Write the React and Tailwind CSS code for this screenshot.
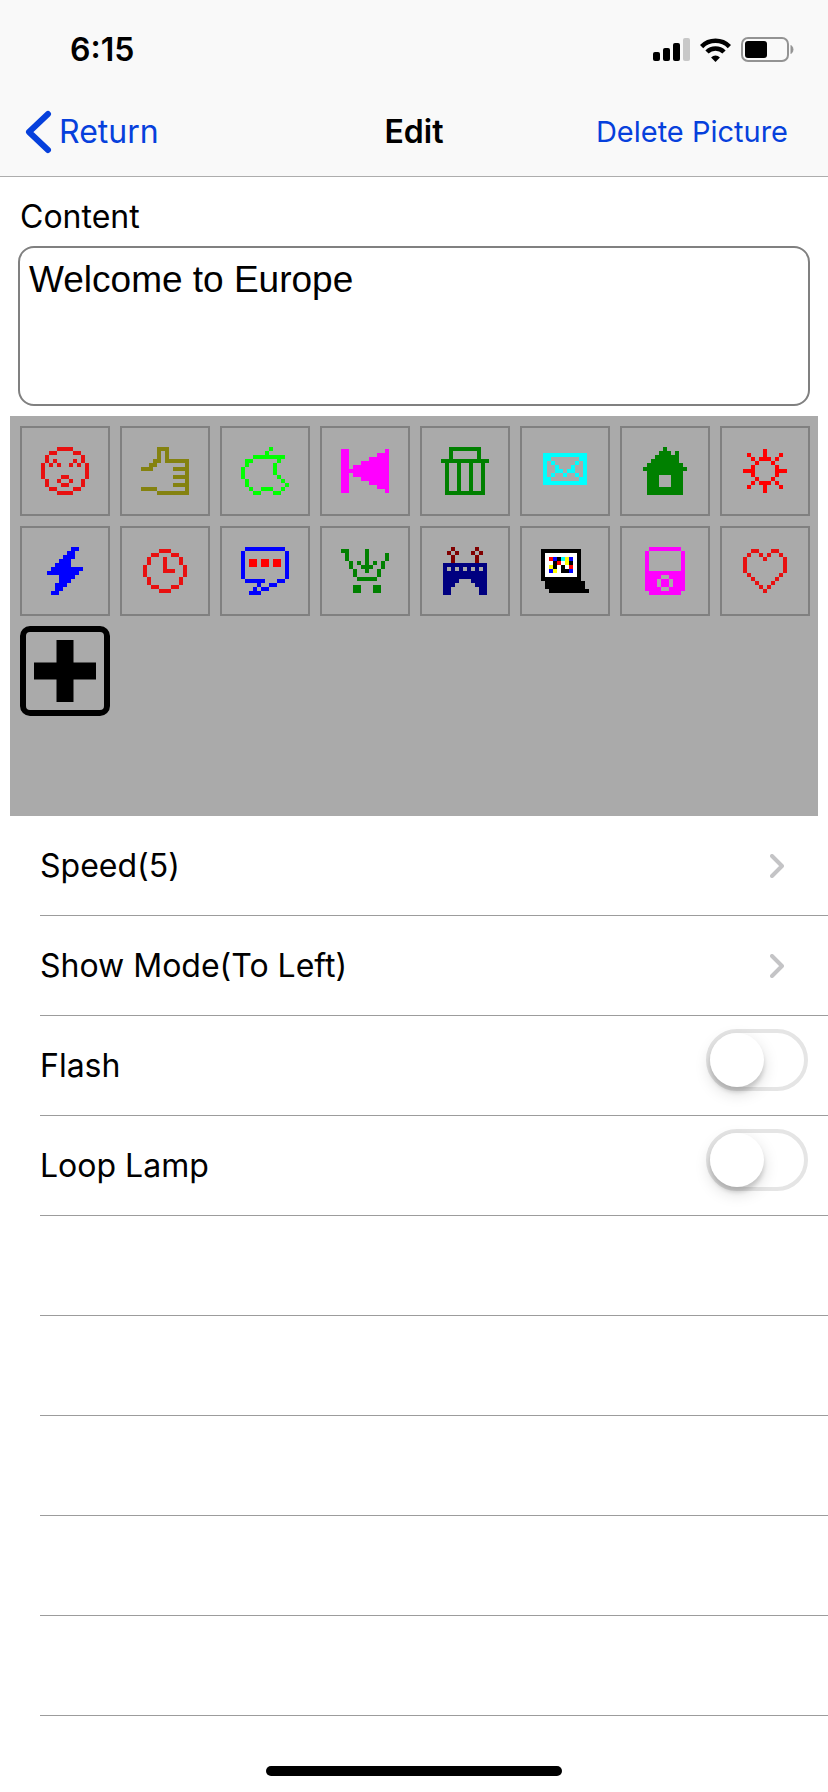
import { useState } from 'react';

const COLORS = {
  r: '#e81010',
  R: '#ff0000',
  o: '#848210',
  l: '#00ff00',
  m: '#ff00ff',
  g: '#008000',
  c: '#00ffff',
  b: '#0000ff',
  n: '#000080',
  d: '#800000',
  k: '#000000',
  w: '#ffffff',
  y: '#ffff00',
};

// one character per LED pixel, '.' is off
const ICONS = [
  {
    name: 'Face',
    rows: [
      '....rrrr....',
      '..rr....rr..',
      '.r........r.',
      '.r.r....r.r.',
      'r.r.r..r.r.r',
      'r..........r',
      'r..........r',
      'r....rr....r',
      '.r..r..r..r.',
      '.r...rr...r.',
      '..rr....rr..',
      '....rrrr....',
    ],
  },
  {
    name: 'Thumb up',
    rows: [
      '....ooo.....',
      '....o.o.....',
      '....o.o.....',
      '...oo.oooooo',
      '..oo.......o',
      'ooo.....oooo',
      '...........o',
      '........oooo',
      '...........o',
      '........oooo',
      'oooo.......o',
      '....oooooooo',
    ],
  },
  {
    name: 'Apple',
    rows: [
      '.......l....',
      '......l.....',
      '...llllllll.',
      '.ll......l..',
      '.l......l...',
      'l.......l...',
      'l.......l...',
      'l........l..',
      '.l........l.',
      '.l.........l',
      '..l..lll..l.',
      '...ll...ll..',
    ],
  },
  {
    name: 'Horn',
    rows: [
      'mm.........m',
      'mm.......mmm',
      'mm.....mmmmm',
      'mm...mmmmmmm',
      'mm.mmmmmmmmm',
      'mmmmmmmmmmmm',
      'mm.mmmmmmmmm',
      'mm...mmmmmmm',
      'mm.....mmmmm',
      'mm.......mmm',
      'mm.........m',
    ],
  },
  {
    name: 'Trash',
    rows: [
      '..gggggggg..',
      '..g......g..',
      '..g......g..',
      'gggggggggggg',
      '.g..g..g..g.',
      '.g..g..g..g.',
      '.g..g..g..g.',
      '.g..g..g..g.',
      '.g..g..g..g.',
      '.g..g..g..g.',
      '.g..g..g..g.',
      '.gggggggggg.',
    ],
  },
  {
    name: 'Mail',
    rows: [
      'ccccccccccc',
      'cc.......cc',
      'c.c.....c.c',
      'c..c...c..c',
      'c..cc.cc..c',
      'c.c..c..c.c',
      'cc.......cc',
      'ccccccccccc',
      '...........',
    ],
  },
  {
    name: 'House',
    rows: [
      '.....g.....',
      '....ggg.g..',
      '...gggggg..',
      '..ggggggg..',
      '.ggggggggg.',
      'ggggggggggg',
      '.ggggggggg.',
      '.ggg...ggg.',
      '.ggg...ggg.',
      '.ggg...ggg.',
      '.ggggggggg.',
      '.ggggggggg.',
    ],
  },
  {
    name: 'Sun',
    rows: [
      '.....R.....',
      '.R...R...R.',
      '..R.RRR.R..',
      '...R...R...',
      '..R.....R..',
      'RRR.....RRR',
      '..R.....R..',
      '...R...R...',
      '..R.RRR.R..',
      '.R...R...R.',
      '.....R.....',
    ],
  },
  {
    name: 'Lightning',
    rows: [
      '......bb.',
      '.....bb..',
      '....bbb..',
      '...bbb...',
      '..bbbb...',
      '.bbbbbbbb',
      'bbbbbbbb.',
      '...bbbb..',
      '...bbb...',
      '..bbb....',
      '..bb.....',
      '.bb......',
    ],
  },
  {
    name: 'Clock',
    rows: [
      '....rrr....',
      '..rr...rr..',
      '.r...r...r.',
      '.r...r...r.',
      'r....r....r',
      'r....rrr..r',
      'r.........r',
      '.r.......r.',
      '.r.......r.',
      '..rr...rr..',
      '....rrr....',
    ],
  },
  {
    name: 'Message',
    rows: [
      '.bbbbbbbbbb.',
      'b..........b',
      'b..........b',
      'b.RR.RR.RR.b',
      'b.RR.RR.RR.b',
      'b..........b',
      'b..........b',
      'b..........b',
      '.bbbbb...bb.',
      '....b..bb...',
      '...b.bb.....',
      '..bbb.......',
    ],
  },
  {
    name: 'Cart',
    rows: [
      'gg....g.....',
      '.g....g....g',
      '.g....g....g',
      '..g.g.g.g.g.',
      '..g..ggg..g.',
      '...g..g..g..',
      '...g.....g..',
      '....ggggg...',
      '............',
      '...gg...gg..',
      '...gg...gg..',
    ],
  },
  {
    name: 'Bridge',
    rows: [
      '..d.....d..',
      '.d.d...d.d.',
      '..d.....d..',
      '..d.....d..',
      'nnnnnnnnnnn',
      'n.n.n.n.n.n',
      'nnnnnnnnnnn',
      'nnnnnnnnnnn',
      'nnnn...nnnn',
      'nnn.....nnn',
      'nn.......nn',
      'nn.......nn',
    ],
  },
  {
    name: 'Computer',
    rows: [
      'kkkkkkkkkk..',
      'kwwwwwwwwk..',
      'kwRbkcybwk..',
      'kwwkRwykwk..',
      'kwykwkwRwk..',
      'kwbywkkbwk..',
      'kwwwwwwwwk..',
      'kkkkkkkkkk..',
      '.kkkkkkkkkk.',
      '.kkkkkkkkkk.',
      '..kkkkkkkkkk',
    ],
  },
  {
    name: 'Player',
    rows: [
      '.mmmmmmmm.',
      'm........m',
      'm........m',
      'm........m',
      'm........m',
      'm........m',
      'mmmmmmmmmm',
      'mmmm..mmmm',
      'mmm.mm.mmm',
      'mmm.mm.mmm',
      'mmmm..mmmm',
      '.mmmmmmmm.',
    ],
  },
  {
    name: 'Heart',
    rows: [
      '..rr...rr..',
      '.r..r.r..r.',
      'r....r....r',
      'r.........r',
      'r.........r',
      'r.........r',
      '.r.......r.',
      '..r.....r..',
      '...r...r...',
      '....r.r....',
      '.....r.....',
    ],
  },
];

function PixelIcon({ rows }) {
  const cols = rows[0].length;
  return (
    <svg
      width={cols * 4}
      height={rows.length * 4}
      viewBox={`0 0 ${cols} ${rows.length}`}
      shapeRendering="crispEdges"
      aria-hidden="true"
    >
      {rows.map((row, y) =>
        row.split('').map((ch, x) =>
          ch === '.' ? null : (
            <rect key={`${x}-${y}`} x={x} y={y} width="1" height="1" fill={COLORS[ch]} />
          )
        )
      )}
    </svg>
  );
}

function StatusBar() {
  return (
    <div className="flex h-[88px] items-center justify-between pt-3 pr-[33px] pl-[70px]">
      <span className="text-[32px] leading-10 font-semibold">6:15</span>
      <div className="flex items-center gap-[10px]">
        <svg width="37" height="24" viewBox="0 0 37 24" aria-hidden="true">
          <rect x="0" y="14" width="7" height="9" rx="2" />
          <rect x="10" y="10" width="7" height="13" rx="2" />
          <rect x="20" y="5" width="7" height="18" rx="2" />
          <rect x="30" y="0" width="7" height="23" rx="2" fill="#c8c8c8" />
        </svg>
        <svg width="31" height="24" viewBox="0 0 31 24" aria-hidden="true">
          <g fill="none" stroke="#000" strokeWidth="4.6">
            <path d="M1.6 8.6a19.6 19.6 0 0 1 27.8 0" />
            <path d="M7 14a12 12 0 0 1 17 0" />
          </g>
          <path d="M15.5 24l-4.4-4.6a6.3 6.3 0 0 1 8.8 0z" />
        </svg>
        <svg width="54" height="26" viewBox="0 0 54 26" aria-hidden="true">
          <rect x="1" y="1" width="46" height="23" rx="6" fill="none" stroke="#939393" strokeWidth="2" />
          <rect x="4" y="4" width="22" height="17" rx="3" />
          <path d="M50 8.500a5 5 0 0 1 0 8z" fill="#939393" stroke="#939393" />
        </svg>
      </div>
    </div>
  );
}

function Row({ children }) {
  return (
    <li className="ml-10 flex h-[100px] items-center justify-between border-b border-[#9c9c9c] text-[32px]">
      {children}
    </li>
  );
}

function LinkRow({ label }) {
  return (
    <Row>
      <button type="button" className="flex h-full w-full items-center justify-between pr-11">
        <span>{label}</span>
        <svg width="14" height="24" viewBox="0 0 14 24" fill="none" aria-hidden="true">
          <path d="M2 2l10 10L2 22" stroke="#c4c4c6" strokeWidth="4" strokeLinecap="round" strokeLinejoin="round" />
        </svg>
      </button>
    </Row>
  );
}

function SwitchRow({ id, label }) {
  const [on, setOn] = useState(false);

  return (
    <Row>
      <label htmlFor={id}>{label}</label>
      <div className="h-full pt-[13px] pr-5">
        <input
          id={id}
          type="checkbox"
          role="switch"
          checked={on}
          onChange={(e) => setOn(e.target.checked)}
          className="block h-[62px] w-[102px] appearance-none rounded-full border-4 border-[#e5e5e5] before:block before:size-[54px] before:rounded-full before:bg-white before:shadow-[0_6px_16px_rgba(0,0,0,0.15),0_5px_4px_rgba(0,0,0,0.14)] checked:border-[#34c759] checked:bg-[#34c759] checked:before:ml-10"
        />
      </div>
    </Row>
  );
}

export default function App() {
  const [content, setContent] = useState('Welcome to Europe');

  return (
    <div className="flex min-h-screen flex-col bg-white font-['Inter',sans-serif] text-black">
      <header className="border-b border-[#adadad] bg-[#f9f9f9]">
        <StatusBar />
        <nav className="grid h-[88px] grid-cols-[1fr_auto_1fr] items-center px-6">
          <a href="#return" className="flex items-center gap-[7px] text-[32px] text-[#0640dc]">
            <svg width="28" height="44" viewBox="0 0 28 44" fill="none" aria-hidden="true">
              <path d="M24 4L5 22l19 18" stroke="currentColor" strokeWidth="6" strokeLinecap="round" strokeLinejoin="round" />
            </svg>
            Return
          </a>
          <h1 className="text-[32px] font-semibold">Edit</h1>
          <button type="button" className="mr-4 justify-self-end text-[29px] text-[#0640dc]">
            Delete Picture
          </button>
        </nav>
      </header>

      <main className="flex-1">
        <div className="px-[18px] pt-5">
          <label htmlFor="content" className="block pl-[2px] text-[32px] leading-10">
            Content
          </label>
          <textarea
            id="content"
            value={content}
            onChange={(e) => setContent(e.target.value)}
            className="mt-[9px] block h-40 w-full resize-none rounded-[16px] border-2 border-[#808080] px-[9px] py-2 font-['Liberation_Sans','Noto_Sans_CJK_SC',sans-serif] text-[37px] leading-[48px] outline-none"
          />
        </div>

        <div className="mx-[10px] mt-[10px] grid min-h-[400px] grid-cols-8 content-start gap-[10px] bg-[#aaaaaa] pt-[10px] pr-2 pl-[10px]">
          {ICONS.map((icon) => (
            <button
              key={icon.name}
              type="button"
              aria-label={icon.name}
              className="flex aspect-square items-center justify-center border-2 border-[#808080]"
            >
              <PixelIcon rows={icon.rows} />
            </button>
          ))}
          <button
            type="button"
            aria-label="Add picture"
            className="flex aspect-square items-center justify-center rounded-[10px] border-6 border-black"
          >
            <svg width="62" height="62" viewBox="0 0 62 62" aria-hidden="true">
              <path d="M22.500 0h17v22.500H62v17H39.500V62h-17V39.500H0v-17h22.500z" />
            </svg>
          </button>
        </div>

        <ul>
          <LinkRow label="Speed(5)" />
          <LinkRow label="Show Mode(To Left)" />
          <SwitchRow id="flash" label="Flash" />
          <SwitchRow id="loop-lamp" label="Loop Lamp" />
          {[1, 2, 3, 4, 5].map((n) => (
            <Row key={n} />
          ))}
        </ul>
      </main>

      <div className="flex justify-center pb-4">
        <div className="h-[10px] w-[296px] rounded-full bg-black" />
      </div>
    </div>
  );
}
